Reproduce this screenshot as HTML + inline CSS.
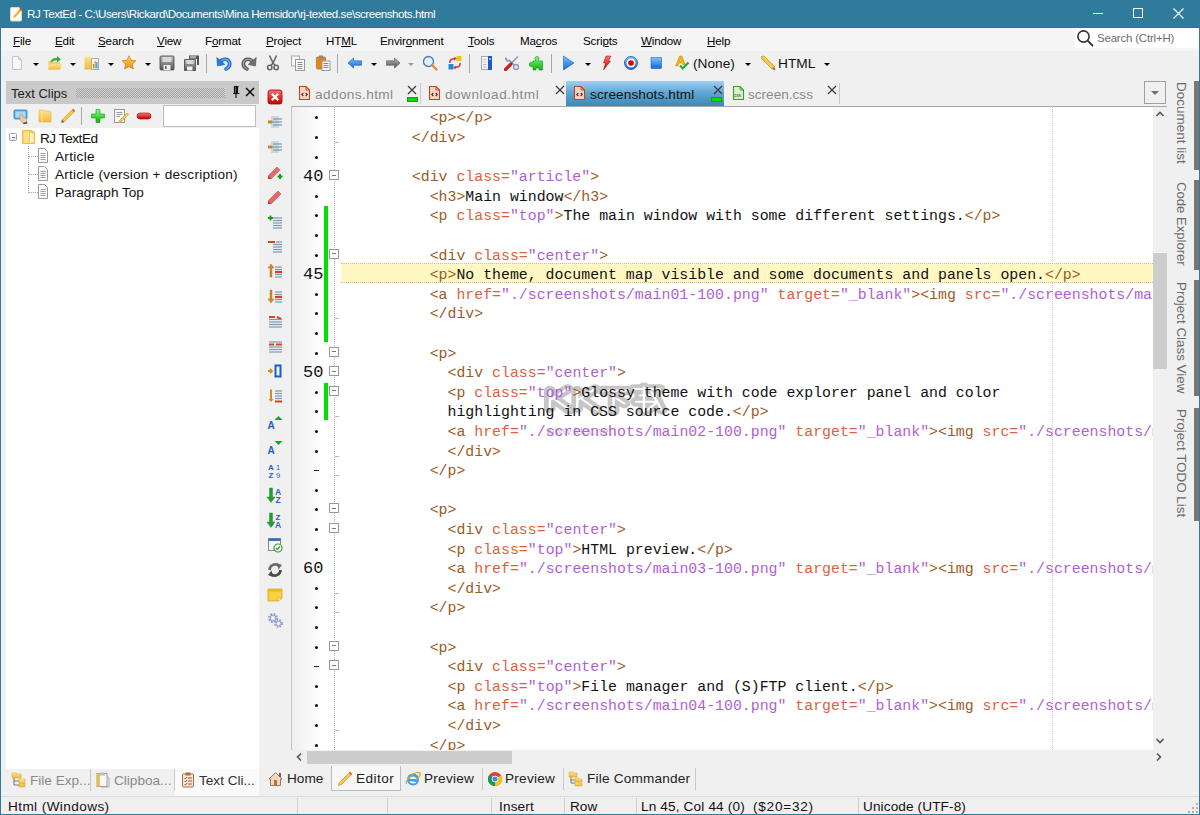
<!DOCTYPE html><html><head><meta charset="utf-8"><style>
*{box-sizing:border-box;margin:0;padding:0}
html,body{width:1200px;height:815px;overflow:hidden;background:#f0f0f0;font-family:"Liberation Sans",sans-serif;color:#000}
.abs{position:absolute}
.t{position:absolute;white-space:pre;line-height:1}
.code{position:absolute;left:0;white-space:pre;font-family:"Liberation Mono",monospace;font-size:14.86px;line-height:19.6px;height:19.6px}
.tg{color:#9c5a1f}.at{color:#e0603e}.vl{color:#b060d4}.tx{color:#111}
</style></head><body>

<svg width="0" height="0" style="position:absolute"><defs>
<linearGradient id="gFolder" x1="0" y1="0" x2="0" y2="1"><stop offset="0" stop-color="#ffe48a"/><stop offset="1" stop-color="#f2b93a"/></linearGradient>
<linearGradient id="gStar" x1="0" y1="0" x2="0" y2="1"><stop offset="0" stop-color="#ffd75a"/><stop offset="1" stop-color="#f08a10"/></linearGradient>
<linearGradient id="gBlue" x1="0" y1="0" x2="0" y2="1"><stop offset="0" stop-color="#7cc4ff"/><stop offset="1" stop-color="#1266d8"/></linearGradient>
<linearGradient id="gGrey" x1="0" y1="0" x2="0" y2="1"><stop offset="0" stop-color="#b8b8b8"/><stop offset="1" stop-color="#555"/></linearGradient>
<linearGradient id="gRed" x1="0" y1="0" x2="0" y2="1"><stop offset="0" stop-color="#ff7070"/><stop offset="1" stop-color="#c00000"/></linearGradient>
<linearGradient id="gGreen" x1="0" y1="0" x2="0" y2="1"><stop offset="0" stop-color="#80ff80"/><stop offset="1" stop-color="#10b010"/></linearGradient>
</defs></svg>
<div class="abs" style="left:0;top:0;width:1200px;height:28px;background:#2e7b9b"></div>
<div class="abs" style="left:0;top:27px;width:1200px;height:1px;background:#28769a"></div>
<svg class="abs" style="left:9px;top:6px" width="14" height="16" viewBox="0 0 14 16">
<path d="M1.5 2.5 Q1.5 1.5 2.5 1.5 H10 L12.5 4 V14 Q12.5 15 11.5 15 H2.5 Q1.5 15 1.5 14 Z" fill="#fdfdf5" stroke="#d8d8c8"/>
<path d="M4 12 L5 9.5 L11 3 L12.5 4.5 L6.5 11 Z" fill="#f0b030"/><circle cx="12" cy="3.3" r="1.3" fill="#e04020"/></svg>
<div class="t" style="left:27px;top:8px;font-size:11.6px;color:#fff;letter-spacing:-0.45px">RJ TextEd - C:\Users\Rickard\Documents\Mina Hemsidor\rj-texted.se\screenshots.html</div>
<div class="abs" style="left:1093px;top:13px;width:10px;height:1px;background:#fff"></div>
<div class="abs" style="left:1133px;top:8px;width:10px;height:10px;border:1px solid #fff"></div>
<svg class="abs" style="left:1173px;top:8px" width="11" height="11" viewBox="0 0 11 11"><path d="M0.5 0.5 L10.5 10.5 M10.5 0.5 L0.5 10.5" stroke="#fff" stroke-width="1.1"/></svg>
<div class="abs" style="left:0;top:27px;width:1px;height:788px;background:#2e7b9b"></div>
<div class="abs" style="left:1199px;top:27px;width:1px;height:788px;background:#2e7b9b"></div>
<div class="abs" style="left:0;top:814px;width:1200px;height:1px;background:#2e7b9b"></div>
<div class="abs" style="left:1px;top:28px;width:1198px;height:23px;background:#f5f5f5"></div>
<div class="t" style="left:13px;top:35px;font-size:11.6px;color:#000;letter-spacing:-0.15px"><u>F</u>ile</div>
<div class="t" style="left:55px;top:35px;font-size:11.6px;color:#000;letter-spacing:-0.15px"><u>E</u>dit</div>
<div class="t" style="left:98px;top:35px;font-size:11.6px;color:#000;letter-spacing:-0.15px"><u>S</u>earch</div>
<div class="t" style="left:157px;top:35px;font-size:11.6px;color:#000;letter-spacing:-0.15px"><u>V</u>iew</div>
<div class="t" style="left:205px;top:35px;font-size:11.6px;color:#000;letter-spacing:-0.15px">F<u>o</u>rmat</div>
<div class="t" style="left:266px;top:35px;font-size:11.6px;color:#000;letter-spacing:-0.15px"><u>P</u>roject</div>
<div class="t" style="left:326px;top:35px;font-size:11.6px;color:#000;letter-spacing:-0.15px">HT<u>M</u>L</div>
<div class="t" style="left:380px;top:35px;font-size:11.6px;color:#000;letter-spacing:-0.15px">Envir<u>o</u>nment</div>
<div class="t" style="left:468px;top:35px;font-size:11.6px;color:#000;letter-spacing:-0.15px"><u>T</u>ools</div>
<div class="t" style="left:520px;top:35px;font-size:11.6px;color:#000;letter-spacing:-0.15px">Ma<u>c</u>ros</div>
<div class="t" style="left:583px;top:35px;font-size:11.6px;color:#000;letter-spacing:-0.15px">Scri<u>p</u>ts</div>
<div class="t" style="left:641px;top:35px;font-size:11.6px;color:#000;letter-spacing:-0.15px"><u>W</u>indow</div>
<div class="t" style="left:707px;top:35px;font-size:11.6px;color:#000;letter-spacing:-0.15px"><u>H</u>elp</div>
<div class="abs" style="left:1075px;top:28px;width:124px;height:20px;background:#fff"></div>
<svg class="abs" style="left:1076px;top:29px" width="19" height="19" viewBox="0 0 19 19"><circle cx="7.5" cy="7.5" r="5.6" fill="none" stroke="#333" stroke-width="1.6"/><path d="M11.6 11.6 L17 17" stroke="#333" stroke-width="1.8"/></svg>
<div class="t" style="left:1097px;top:33px;font-size:11.5px;color:#6d6d6d;letter-spacing:-0.2px">Search (Ctrl+H)</div>
<div class="abs" style="left:1px;top:51px;width:1198px;height:29px;background:#f0f0f0"></div>
<svg class="abs" style="left:9px;top:55px" width="16" height="16" viewBox="0 0 16 16"><path d="M3.5 1.5 H9.5 L12.5 4.5 V14.5 H3.5 Z" fill="#f6f6f6" stroke="#c4c4c4"/><path d="M9.5 1.5 V4.5 H12.5" fill="#e0e0e0" stroke="#c4c4c4"/></svg>
<svg class="abs" style="left:47px;top:55px" width="16" height="16" viewBox="0 0 16 16"><path d="M1.5 6 H6 L7 7 H13 V14.5 H1.5 Z" fill="#f6cf6a"/><path d="M1 14.5 L3 9 H15 L13 14.5 Z" fill="url(#gFolder)"/><path d="M3.5 8 Q4 2.5 10 3 L10 1 L14 4.2 L10 7.5 L10 5.3 Q6 5 3.5 8 Z" fill="#2fae3a"/></svg>
<svg class="abs" style="left:84px;top:55px" width="16" height="16" viewBox="0 0 16 16"><path d="M0.5 1.5 H6 L7 3 H11 V14.5 H0.5 Z" fill="url(#gFolder)"/><rect x="7.5" y="3.5" width="7" height="11" fill="#fafafa" stroke="#aaa"/><rect x="9" y="9" width="1.3" height="4.5" fill="#5b5"/><rect x="10.6" y="6" width="1.3" height="7.5" fill="#f84"/><rect x="12.2" y="7" width="1.3" height="6.5" fill="#29d"/></svg>
<svg class="abs" style="left:121px;top:55px" width="16" height="16" viewBox="0 0 16 16"><path d="M8 0.8 L10.1 5.3 L15 5.8 L11.3 9.1 L12.4 14 L8 11.5 L3.6 14 L4.7 9.1 L1 5.8 L5.9 5.3 Z" fill="url(#gStar)" stroke="#d07a10" stroke-width="0.7"/></svg>
<svg class="abs" style="left:159px;top:55px" width="16" height="16" viewBox="0 0 16 16"><path d="M1 2 Q1 1 2 1 H14 Q15 1 15 2 V14 Q15 15 14 15 H2 Q1 15 1 14 Z" fill="url(#gGrey)" stroke="#444" stroke-width="0.8"/><rect x="3.5" y="2" width="9" height="5" fill="#d8d8d8"/><rect x="4.5" y="10" width="7" height="5" fill="#eee"/><rect x="6" y="11" width="1.5" height="3" fill="#555"/></svg>
<svg class="abs" style="left:184px;top:55px" width="16" height="16" viewBox="0 0 16 16"><path d="M5 0.5 H15 V10 H13 V4 H5 Z" fill="#555"/><rect x="6" y="1" width="6" height="2.5" fill="#aaa"/><path d="M0.5 4.5 H11.5 V15.5 H0.5 Z" fill="url(#gGrey)" stroke="#444" stroke-width="0.8"/><rect x="2.5" y="5" width="7" height="4" fill="#d8d8d8"/><rect x="3" y="11.5" width="5.5" height="4" fill="#eee"/></svg>
<svg class="abs" style="left:216px;top:55px" width="16" height="16" viewBox="0 0 16 16"><path d="M10 14 Q14.5 11.5 13.5 7.5 Q12 3.5 7.5 4.5 Q5.5 5 4.5 6.5" stroke="#1a5cc0" stroke-width="3.6" fill="none" stroke-linecap="round"/><path d="M10 14 Q14.5 11.5 13.5 7.5 Q12 3.5 7.5 4.5 Q5.5 5 4.5 6.5" stroke="#5aaaf8" stroke-width="1.8" fill="none" stroke-linecap="round"/><path d="M0.8 2.5 L1.5 11 L9 9.5 Z" fill="#2a78e0" stroke="#1a5cc0" stroke-width="0.6" stroke-linejoin="round"/></svg>
<svg class="abs" style="left:241px;top:55px" width="16" height="16" viewBox="0 0 16 16"><path d="M6 14 Q1.5 11.5 2.5 7.5 Q4 3.5 8.5 4.5 Q10.5 5 11.5 6.5" stroke="#505050" stroke-width="3.6" fill="none" stroke-linecap="round"/><path d="M6 14 Q1.5 11.5 2.5 7.5 Q4 3.5 8.5 4.5 Q10.5 5 11.5 6.5" stroke="#9a9a9a" stroke-width="1.6" fill="none" stroke-linecap="round"/><path d="M15.2 2.5 L14.5 11 L7 9.5 Z" fill="#707070" stroke="#505050" stroke-width="0.6" stroke-linejoin="round"/></svg>
<svg class="abs" style="left:265px;top:55px" width="16" height="16" viewBox="0 0 16 16"><path d="M4.5 0.5 L8 8 M11.5 0.5 L8 8" stroke="#666" stroke-width="1.6"/><path d="M8 8 L5.5 11 M8 8 L10.5 11" stroke="#666" stroke-width="1.4"/><circle cx="4.8" cy="12.5" r="2.2" fill="none" stroke="#666" stroke-width="1.5"/><circle cx="11.2" cy="12.5" r="2.2" fill="none" stroke="#666" stroke-width="1.5"/></svg>
<svg class="abs" style="left:290px;top:55px" width="16" height="16" viewBox="0 0 16 16"><rect x="1.5" y="1" width="8" height="10" fill="#f6f6f6" stroke="#aaa"/><rect x="5.5" y="4.5" width="9" height="11" fill="#fafafa" stroke="#999"/><path d="M7.5 7.5 H12.5 M7.5 9.5 H12.5 M7.5 11.5 H12.5 M7.5 13.5 H12" stroke="#888"/></svg>
<svg class="abs" style="left:315px;top:55px" width="16" height="16" viewBox="0 0 16 16"><rect x="1.5" y="2" width="9" height="12" rx="1" fill="#e0861a" stroke="#a85a08" stroke-width="0.6"/><rect x="4" y="0.5" width="4" height="3" fill="#888"/><rect x="7" y="6" width="8" height="9.5" fill="#fafafa" stroke="#999"/><path d="M8.5 8.5 H13.5 M8.5 10.5 H13.5 M8.5 12.5 H13.5" stroke="#888"/></svg>
<svg class="abs" style="left:347px;top:55px" width="16" height="16" viewBox="0 0 16 16"><path d="M1 8 L6.5 3 V5.8 H14.5 V10.2 H6.5 V13 Z" fill="url(#gBlue)" stroke="#1a5cc0" stroke-width="0.6"/></svg>
<svg class="abs" style="left:385px;top:55px" width="16" height="16" viewBox="0 0 16 16"><path d="M15 8 L9.5 3 V5.8 H1.5 V10.2 H9.5 V13 Z" fill="url(#gGrey)" stroke="#555" stroke-width="0.6"/></svg>
<svg class="abs" style="left:422px;top:55px" width="16" height="16" viewBox="0 0 16 16"><circle cx="6.5" cy="6.5" r="5" fill="#dff0ff" stroke="#4a7ab0" stroke-width="1.3"/><path d="M10 10 L14.5 14.5" stroke="#e08a30" stroke-width="2.3" stroke-linecap="round"/></svg>
<svg class="abs" style="left:447px;top:55px" width="16" height="16" viewBox="0 0 16 16"><rect x="9.5" y="1" width="5" height="5" fill="#f8c400"/><rect x="1.5" y="9" width="5" height="5.5" fill="#1e90d0"/><path d="M2 8 Q2 3 7.5 3 L7 1.5 L10 3.5 L7 5.5 L7.2 4.5 Q3.5 4.5 3.5 8 Z" fill="#e03030"/><path d="M14 8 Q14 13 8.5 13 L9 14.5 L6 12.5 L9 10.5 L8.8 11.5 Q12.5 11.5 12.5 8 Z" fill="#e03030"/></svg>
<svg class="abs" style="left:479px;top:55px" width="16" height="16" viewBox="0 0 16 16"><rect x="2.5" y="1.5" width="10" height="13" fill="#f4f4f4" stroke="#a8a8a8"/><rect x="9" y="1" width="4" height="14" fill="#1a5cc8"/><rect x="10.5" y="3" width="1" height="2" fill="#fff"/><path d="M4 4.5 H7.5 M4 7 H7.5 M4 9.5 H7.5 M4 12 H7.5" stroke="#b8b8b8" stroke-width="0.8"/></svg>
<svg class="abs" style="left:504px;top:55px" width="16" height="16" viewBox="0 0 16 16"><path d="M14 1.5 L6.5 9" stroke="#8a96c0" stroke-width="1.6"/><circle cx="12" cy="12" r="2.4" fill="none" stroke="#8a96c0" stroke-width="1.5"/><path d="M9.8 9.8 L5 5" stroke="#8a96c0" stroke-width="1.6"/><path d="M2 2.5 A2.5 2.5 0 0 0 5.5 5.5" stroke="#8a96c0" stroke-width="1.8" fill="none"/><path d="M1.5 14.5 L7 9" stroke="#c81e1e" stroke-width="3.2" stroke-linecap="round"/></svg>
<svg class="abs" style="left:529px;top:55px" width="16" height="16" viewBox="0 0 16 16"><path d="M4 6 H6.5 V4.8 A2 2 0 1 1 9.5 4.8 V6 H13.5 V15 H10 V13 H7 V15 H4 V11 A2.2 2.2 0 1 1 4 8 Z" fill="url(#gGreen)" stroke="#109010" stroke-width="0.6"/></svg>
<svg class="abs" style="left:561px;top:55px" width="16" height="16" viewBox="0 0 16 16"><path d="M2.5 1 L13 8 L2.5 15 Z" fill="url(#gBlue)" stroke="#1a5cc0" stroke-width="0.6"/></svg>
<svg class="abs" style="left:599px;top:55px" width="16" height="16" viewBox="0 0 16 16"><path d="M7 1 H12 L9.5 6 H11.5 L4.5 15 L6.5 8 H4.5 Z" fill="url(#gRed)" stroke="#a01010" stroke-width="0.5"/></svg>
<svg class="abs" style="left:623px;top:55px" width="16" height="16" viewBox="0 0 16 16"><circle cx="8" cy="8" r="6.5" fill="url(#gBlue)" stroke="#1a50b0" stroke-width="0.8"/><circle cx="8" cy="8" r="4.5" fill="#e8f4ff"/><circle cx="8" cy="8" r="2.8" fill="#e00000"/></svg>
<svg class="abs" style="left:648px;top:55px" width="16" height="16" viewBox="0 0 16 16"><rect x="3" y="2.5" width="10.5" height="11" fill="url(#gBlue)" stroke="#1a50b0" stroke-width="0.5"/></svg>
<svg class="abs" style="left:674px;top:55px" width="16" height="16" viewBox="0 0 16 16"><path d="M1.5 11 L5.5 1 H8 L11.5 10 H9 L8.2 8 H5 L4.2 11 Z M5.6 6 H7.6 L6.6 3 Z" fill="#f2b30a" stroke="#c08000" stroke-width="0.4"/><path d="M6 10.5 L8.8 13.5 L14.5 7.5" stroke="#28a838" stroke-width="2.2" fill="none"/></svg>
<svg class="abs" style="left:760px;top:55px" width="16" height="16" viewBox="0 0 16 16"><path d="M1.5 1.5 L4 1 L14.5 11.5 L12 14 L1.5 3.5 Z" fill="#f5c84a" stroke="#c89020" stroke-width="0.7"/><path d="M12 14 L14.5 11.5 L15.5 15.5 Z" fill="#a07060"/></svg>
<div class="abs" style="left:33px;top:63px;width:0;height:0;border-left:3px solid transparent;border-right:3px solid transparent;border-top:3px solid #000"></div>
<div class="abs" style="left:70px;top:63px;width:0;height:0;border-left:3px solid transparent;border-right:3px solid transparent;border-top:3px solid #000"></div>
<div class="abs" style="left:108px;top:63px;width:0;height:0;border-left:3px solid transparent;border-right:3px solid transparent;border-top:3px solid #000"></div>
<div class="abs" style="left:145px;top:63px;width:0;height:0;border-left:3px solid transparent;border-right:3px solid transparent;border-top:3px solid #000"></div>
<div class="abs" style="left:371px;top:63px;width:0;height:0;border-left:3px solid transparent;border-right:3px solid transparent;border-top:3px solid #000"></div>
<div class="abs" style="left:585px;top:63px;width:0;height:0;border-left:3px solid transparent;border-right:3px solid transparent;border-top:3px solid #000"></div>
<div class="abs" style="left:745px;top:63px;width:0;height:0;border-left:3px solid transparent;border-right:3px solid transparent;border-top:3px solid #000"></div>
<div class="abs" style="left:824px;top:63px;width:0;height:0;border-left:3px solid transparent;border-right:3px solid transparent;border-top:3px solid #000"></div>
<div class="abs" style="left:408px;top:63px;width:0;height:0;border-left:3px solid transparent;border-right:3px solid transparent;border-top:3px solid #9a9a9a"></div>
<div class="abs" style="left:206px;top:54px;width:1px;height:19px;background:#a8a8a8"></div>
<div class="abs" style="left:337px;top:54px;width:1px;height:19px;background:#a8a8a8"></div>
<div class="abs" style="left:469px;top:54px;width:1px;height:19px;background:#a8a8a8"></div>
<div class="abs" style="left:551px;top:54px;width:1px;height:19px;background:#a8a8a8"></div>
<div class="t" style="left:693px;top:57px;font-size:13.7px;color:#111">(None)</div>
<div class="t" style="left:778px;top:57px;font-size:13.7px;color:#111">HTML</div>
<div class="abs" style="left:6px;top:81px;width:253px;height:23px;background:#c9c9c9"></div>
<div class="abs" style="left:76px;top:88px;width:149px;height:10px;background-image:repeating-conic-gradient(#a6a6a6 0 25%, #cfcfcf 0 50%);background-size:2px 2px"></div>
<div class="t" style="left:11px;top:87px;font-size:13px;color:#1e1e1e">Text Clips</div>
<svg class="abs" style="left:231px;top:85px" width="10" height="14" viewBox="0 0 10 14"><path d="M3 1.5 H7.5 M3.5 1.5 V8 M6.5 1.5 V8 M2 8.5 H8.5 M5 8.5 V13" stroke="#111" stroke-width="1.2" fill="none"/><rect x="4.5" y="2" width="1.5" height="6" fill="#111"/></svg>
<svg class="abs" style="left:245px;top:87px" width="10" height="10" viewBox="0 0 10 10"><path d="M1 1 L9 9 M9 1 L1 9" stroke="#111" stroke-width="1.6"/></svg>
<div class="abs" style="left:163px;top:105px;width:93px;height:22px;background:#fff;border:1px solid #bdbdbd"></div>
<div class="abs" style="left:6px;top:128px;width:253px;height:641px;background:#fff"></div>
<svg class="abs" style="left:13px;top:108px" width="16" height="16" viewBox="0 0 16 16"><rect x="1" y="2" width="13" height="9" rx="1" fill="#5ab0f0" stroke="#2a80c8" stroke-width="0.8"/><rect x="2.5" y="3.5" width="10" height="6" fill="#a8dcff"/><path d="M7 6 L9 6 L10 9 L13 10 L14 14 L10 15 L7 12 Z" fill="#f2c8a0" stroke="#b08060" stroke-width="0.5"/><path d="M10 15 L14 14 L14.5 15.5 L10.5 16 Z" fill="#333"/></svg>
<svg class="abs" style="left:38px;top:108px" width="16" height="16" viewBox="0 0 16 16"><path d="M1 2 H5 L6 3 H11 Q13 3 13 5 V14 H1 Z" fill="url(#gFolder)" stroke="#e0a830" stroke-width="0.5"/><path d="M4 3 V14" stroke="#fff0b0" stroke-width="0.7"/></svg>
<svg class="abs" style="left:60px;top:108px" width="16" height="16" viewBox="0 0 16 16"><path d="M14 1.5 L15 3 L4 14 L1.5 14.5 L2 12 L13 1 Z" fill="#f5c84a" stroke="#c89020" stroke-width="0.6"/><path d="M13 1 L15 3 L14 4 L12 2 Z" fill="#e05030"/><path d="M2 12 L4 14 L1.5 14.5 Z" fill="#604030"/></svg>
<svg class="abs" style="left:90px;top:108px" width="16" height="16" viewBox="0 0 16 16"><path d="M6 1.5 H10 V6 H14.5 V10 H10 V14.5 H6 V10 H1.5 V6 H6 Z" fill="url(#gGreen)" stroke="#10a010" stroke-width="0.6"/></svg>
<svg class="abs" style="left:113px;top:108px" width="16" height="16" viewBox="0 0 16 16"><rect x="1.5" y="1.5" width="10" height="13" fill="#f8f8f8" stroke="#999"/><path d="M3.5 4.5 H9.5 M3.5 6.5 H9.5 M3.5 8.5 H7" stroke="#999"/><path d="M14 5 L15.5 6.5 L8 14 L6 14.5 L6.5 12.5 Z" fill="#f5c84a" stroke="#c89020" stroke-width="0.5"/></svg>
<svg class="abs" style="left:136px;top:108px" width="16" height="16" viewBox="0 0 16 16"><rect x="1" y="5" width="14" height="6" rx="3" fill="url(#gRed)" stroke="#a00000" stroke-width="0.6"/></svg>
<div class="abs" style="left:81px;top:107px;width:1px;height:18px;background:#a8a8a8"></div>
<div class="abs" style="left:9px;top:133px;width:8px;height:8px;border:1px solid #a0a0a0;border-radius:1.5px;background:linear-gradient(#fff,#e6e6e6)"><div class="abs" style="left:1.5px;top:2.5px;width:3px;height:1px;background:#5a6ab8"></div></div>
<svg class="abs" style="left:22px;top:130px" width="13" height="14" viewBox="0 0 13 14"><path d="M0.5 0.5 H9.5 L12.5 2.5 V13.5 H0.5 Z" fill="#f5c842" stroke="#e8b830" stroke-width="0.8"/><path d="M1.5 1.5 H7 V13 H1.5 Z" fill="#fde08a"/><path d="M7.5 2 L12 3.5 V12.5 L7.5 13.5 Z" fill="#fff2c0" stroke="#f0c040" stroke-width="0.6"/></svg>
<div class="t" style="left:40px;top:132px;font-size:13.6px;color:#111;letter-spacing:-0.45px">RJ TextEd</div>
<div class="abs" style="left:28px;top:146px;width:0;height:47px;border-left:1px dotted #a0a0a0"></div>
<div class="abs" style="left:29px;top:156px;width:9px;height:0;border-top:1px dotted #a0a0a0"></div>
<svg class="abs" style="left:36px;top:148px" width="16" height="16" viewBox="0 0 16 16"><path d="M2.5 0.5 H8.5 L11.5 3.5 V14.5 H2.5 Z" fill="#fafafa" stroke="#9a9a9a"/><path d="M4.5 5.5 H9.5 M4.5 7.5 H9.5 M4.5 9.5 H9.5 M4.5 11.5 H9.5" stroke="#a0a0a0"/></svg>
<div class="t" style="left:55px;top:150px;font-size:13.6px;color:#111;letter-spacing:0.3px">Article</div>
<div class="abs" style="left:29px;top:174px;width:9px;height:0;border-top:1px dotted #a0a0a0"></div>
<svg class="abs" style="left:36px;top:166px" width="16" height="16" viewBox="0 0 16 16"><path d="M2.5 0.5 H8.5 L11.5 3.5 V14.5 H2.5 Z" fill="#fafafa" stroke="#9a9a9a"/><path d="M4.5 5.5 H9.5 M4.5 7.5 H9.5 M4.5 9.5 H9.5 M4.5 11.5 H9.5" stroke="#a0a0a0"/></svg>
<div class="t" style="left:55px;top:168px;font-size:13.6px;color:#111;letter-spacing:0.23px">Article (version + description)</div>
<div class="abs" style="left:29px;top:192px;width:9px;height:0;border-top:1px dotted #a0a0a0"></div>
<svg class="abs" style="left:36px;top:184px" width="16" height="16" viewBox="0 0 16 16"><path d="M2.5 0.5 H8.5 L11.5 3.5 V14.5 H2.5 Z" fill="#fafafa" stroke="#9a9a9a"/><path d="M4.5 5.5 H9.5 M4.5 7.5 H9.5 M4.5 9.5 H9.5 M4.5 11.5 H9.5" stroke="#a0a0a0"/></svg>
<div class="t" style="left:55px;top:186px;font-size:13.6px;color:#111">Paragraph Top</div>
<svg class="abs" style="left:267px;top:89px" width="16" height="16" viewBox="0 0 16 16"><rect x="1" y="1" width="14" height="14" rx="2.5" fill="url(#gRed)" stroke="#a00000" stroke-width="0.8"/><path d="M4.8 4.8 L11.2 11.2 M11.2 4.8 L4.8 11.2" stroke="#fff" stroke-width="2.2"/></svg>
<svg class="abs" style="left:267px;top:114px" width="16" height="16" viewBox="0 0 16 16"><rect x="4" y="2" width="8" height="12" fill="#c8d8e4"/><path d="M6 5 H15" stroke="#7a9ab4" stroke-width="1.2"/><path d="M6 8 H15" stroke="#7a9ab4" stroke-width="1.2"/><path d="M6 11 H15" stroke="#7a9ab4" stroke-width="1.2"/><path d="M1 6.5 H4.5 L6.5 8 L4.5 9.5 H1 Z" fill="#c88a20"/></svg>
<svg class="abs" style="left:267px;top:139px" width="16" height="16" viewBox="0 0 16 16"><rect x="4" y="2" width="8" height="12" fill="#c8d8e4"/><path d="M6 5 H15" stroke="#7a9ab4" stroke-width="1.2"/><path d="M6 8 H15" stroke="#7a9ab4" stroke-width="1.2"/><path d="M6 11 H15" stroke="#7a9ab4" stroke-width="1.2"/><path d="M1 6.5 H4.5 L6.5 8 L4.5 9.5 H1 Z" fill="#c88a20"/></svg>
<svg class="abs" style="left:267px;top:164px" width="16" height="16" viewBox="0 0 16 16"><path d="M1 12 L10 3 L13 6 L4 15 Z" fill="#e86868" stroke="#c04040" stroke-width="0.5"/><path d="M1 12 L4 15 L1 15 Z" fill="#b03030"/><path d="M10.5 12.5 H15.5 M13 10 V15" stroke="#10a010" stroke-width="2"/></svg>
<svg class="abs" style="left:267px;top:189px" width="16" height="16" viewBox="0 0 16 16"><path d="M1 12 L11 2 L14 5 L4 15 Z" fill="#e86868" stroke="#c04040" stroke-width="0.5"/><path d="M1 12 L4 15 L1 15 Z" fill="#b03030"/></svg>
<svg class="abs" style="left:267px;top:214px" width="16" height="16" viewBox="0 0 16 16"><path d="M6 4 H15" stroke="#7a9ab4" stroke-width="1.2"/><path d="M6 6.5 H15" stroke="#7a9ab4" stroke-width="1.2"/><path d="M6 9 H15" stroke="#7a9ab4" stroke-width="1.2"/><path d="M6 11.5 H15" stroke="#7a9ab4" stroke-width="1.2"/><path d="M6 14 H15" stroke="#7a9ab4" stroke-width="1.2"/><path d="M1 4 H6 M3.5 1.5 V6.5" stroke="#10a010" stroke-width="1.8"/></svg>
<svg class="abs" style="left:267px;top:238px" width="16" height="16" viewBox="0 0 16 16"><path d="M6 6.5 H15" stroke="#7a9ab4" stroke-width="1.2"/><path d="M6 9 H15" stroke="#7a9ab4" stroke-width="1.2"/><path d="M6 11.5 H15" stroke="#7a9ab4" stroke-width="1.2"/><path d="M6 14 H15" stroke="#7a9ab4" stroke-width="1.2"/><path d="M1 4 H8" stroke="#e04020" stroke-width="2"/><path d="M9 4 H15" stroke="#7a9ab4" stroke-width="1.2"/></svg>
<svg class="abs" style="left:267px;top:263px" width="16" height="16" viewBox="0 0 16 16"><path d="M8 4 H15" stroke="#7a9ab4" stroke-width="1.2"/><path d="M8 6.5 H15" stroke="#7a9ab4" stroke-width="1.2"/><path d="M8 11.5 H15" stroke="#7a9ab4" stroke-width="1.2"/><path d="M8 14 H15" stroke="#7a9ab4" stroke-width="1.2"/><path d="M8 9 H15" stroke="#e04020" stroke-width="2.2"/><path d="M4 1 L7 5 H5 V14 H3 V5 H1 Z" fill="#d88a20" stroke="#a06010" stroke-width="0.4"/></svg>
<svg class="abs" style="left:267px;top:288px" width="16" height="16" viewBox="0 0 16 16"><path d="M8 4 H15" stroke="#7a9ab4" stroke-width="1.2"/><path d="M8 6.5 H15" stroke="#7a9ab4" stroke-width="1.2"/><path d="M8 11.5 H15" stroke="#7a9ab4" stroke-width="1.2"/><path d="M8 14 H15" stroke="#7a9ab4" stroke-width="1.2"/><path d="M8 9 H15" stroke="#e04020" stroke-width="2.2"/><path d="M4 15 L7 11 H5 V2 H3 V11 H1 Z" fill="#d88a20" stroke="#a06010" stroke-width="0.4"/></svg>
<svg class="abs" style="left:267px;top:313px" width="16" height="16" viewBox="0 0 16 16"><path d="M2 9 H15" stroke="#7a9ab4" stroke-width="1.2"/><path d="M2 11.5 H15" stroke="#7a9ab4" stroke-width="1.2"/><path d="M2 14 H15" stroke="#7a9ab4" stroke-width="1.2"/><path d="M2 4 H8 M10 4 L14 6" stroke="#e04020" stroke-width="2"/><path d="M2 6.5 H15" stroke="#7a9ab4" stroke-width="1.2"/></svg>
<svg class="abs" style="left:267px;top:338px" width="16" height="16" viewBox="0 0 16 16"><path d="M2 4 H15" stroke="#7a9ab4" stroke-width="1.2"/><path d="M2 9 H15" stroke="#7a9ab4" stroke-width="1.2"/><path d="M2 11.5 H15" stroke="#7a9ab4" stroke-width="1.2"/><path d="M2 14 H15" stroke="#7a9ab4" stroke-width="1.2"/><path d="M2 6.5 H7 M9 6.5 H15" stroke="#e04020" stroke-width="2"/></svg>
<svg class="abs" style="left:267px;top:363px" width="16" height="16" viewBox="0 0 16 16"><path d="M1 8 H4 M3 6 L5 8 L3 10" stroke="#d88a20" stroke-width="1.8" fill="none"/><rect x="8.5" y="2.5" width="5" height="11" fill="none" stroke="#1a5cc8" stroke-width="2"/></svg>
<svg class="abs" style="left:267px;top:388px" width="16" height="16" viewBox="0 0 16 16"><path d="M8 3 H15" stroke="#7a9ab4" stroke-width="1.2"/><path d="M8 5.5 H15" stroke="#7a9ab4" stroke-width="1.2"/><path d="M8 8 H15" stroke="#7a9ab4" stroke-width="1.2"/><path d="M8 10.5 H15" stroke="#7a9ab4" stroke-width="1.2"/><path d="M8 13.5 H15" stroke="#e04020" stroke-width="2"/><path d="M4 14 L6.5 11 H5 V1.5 H3 V11 H1.5 Z" fill="#d88a20"/></svg>
<svg class="abs" style="left:267px;top:413px" width="16" height="16" viewBox="0 0 16 16"><text x="0.5" y="15.5" font-family="Liberation Sans" font-weight="bold" font-size="10" fill="#2a5cc8">A</text><path d="M7.5 7 L11.5 3 L15.5 7 Z" fill="#20a030"/></svg>
<svg class="abs" style="left:267px;top:438px" width="16" height="16" viewBox="0 0 16 16"><text x="0.5" y="15.5" font-family="Liberation Sans" font-weight="bold" font-size="10" fill="#2a5cc8">A</text><path d="M7.5 3 L11.5 7 L15.5 3 Z" fill="#20a030"/></svg>
<svg class="abs" style="left:267px;top:462px" width="16" height="16" viewBox="0 0 16 16"><text x="1" y="8" font-family="Liberation Sans" font-weight="bold" font-size="8" fill="#2a5cc8">A</text><text x="9" y="7.5" font-family="Liberation Sans" font-size="7.5" fill="#2a5cc8">1</text><text x="1.5" y="15.5" font-family="Liberation Sans" font-weight="bold" font-size="8" fill="#2a5cc8">Z</text><text x="9" y="15.5" font-family="Liberation Sans" font-size="7.5" fill="#2a5cc8">9</text></svg>
<svg class="abs" style="left:267px;top:487px" width="16" height="16" viewBox="0 0 16 16"><path d="M2.5 1 H5.5 V10 H8 L4 15.5 L0 10 H2.5 Z" fill="#20a030" stroke="#108020" stroke-width="0.4"/><text x="8" y="7.5" font-family="Liberation Sans" font-weight="bold" font-size="8.5" fill="#2a5cc8">A</text><text x="8.5" y="15.5" font-family="Liberation Sans" font-weight="bold" font-size="8.5" fill="#2a5cc8">Z</text></svg>
<svg class="abs" style="left:267px;top:512px" width="16" height="16" viewBox="0 0 16 16"><path d="M2.5 1 H5.5 V10 H8 L4 15.5 L0 10 H2.5 Z" fill="#20a030" stroke="#108020" stroke-width="0.4"/><text x="8.5" y="7.5" font-family="Liberation Sans" font-weight="bold" font-size="8" fill="#2a5cc8">Z</text><text x="8" y="15.5" font-family="Liberation Sans" font-weight="bold" font-size="8.5" fill="#2a5cc8">A</text></svg>
<svg class="abs" style="left:267px;top:537px" width="16" height="16" viewBox="0 0 16 16"><rect x="1.5" y="1.5" width="12" height="12" fill="#f4f4f4" stroke="#888"/><rect x="1.5" y="1.5" width="12" height="2.5" fill="#3a70c8"/><circle cx="11" cy="11" r="4" fill="#fff" stroke="#30a040" stroke-width="1.2"/><path d="M9 11 L10.5 12.5 L13 9.5" stroke="#30a040" stroke-width="1.3" fill="none"/></svg>
<svg class="abs" style="left:267px;top:562px" width="16" height="16" viewBox="0 0 16 16"><path d="M2.5 8 A5.5 5.5 0 0 1 12 4.2" stroke="#6a6a6a" stroke-width="2.6" fill="none"/><path d="M10 1 L15 3 L11.5 7.5 Z" fill="#6a6a6a"/><path d="M13.5 8 A5.5 5.5 0 0 1 4 11.8" stroke="#4a4a4a" stroke-width="2.6" fill="none"/><path d="M6 15 L1 13 L4.5 8.5 Z" fill="#4a4a4a"/></svg>
<svg class="abs" style="left:267px;top:587px" width="16" height="16" viewBox="0 0 16 16"><path d="M1 2 H15 V11 L11 14 H1 Z" fill="#f8d040" stroke="#d0a010" stroke-width="0.7"/><path d="M1 2 H15 V4.5 H1 Z" fill="#e8b820"/><path d="M15 11 L11 11 V14 Z" fill="#fff2b0" stroke="#d0a010" stroke-width="0.5"/></svg>
<svg class="abs" style="left:267px;top:612px" width="16" height="16" viewBox="0 0 16 16"><circle cx="6" cy="6" r="4.2" fill="none" stroke="#8a9ad0" stroke-width="1.6" stroke-dasharray="1.8 1.5"/><circle cx="6" cy="6" r="3" fill="#dde4f4" stroke="#8a9ad0" stroke-width="1"/><circle cx="6" cy="6" r="1.2" fill="#fff"/><circle cx="11.5" cy="11.5" r="3.6" fill="none" stroke="#8a9ad0" stroke-width="1.5" stroke-dasharray="1.6 1.3"/><circle cx="11.5" cy="11.5" r="2.5" fill="#dde4f4" stroke="#8a9ad0" stroke-width="0.9"/><circle cx="11.5" cy="11.5" r="1" fill="#fff"/></svg>
<div class="abs" style="left:566px;top:81px;width:158px;height:25px;background:linear-gradient(#9fd0f5 0%,#62a6d3 45%,#3f88b3 100%)"></div>
<div class="t" style="left:315px;top:88px;font-size:13.6px;color:#8a8a8a;letter-spacing:0.4px">addons.html</div>
<div class="t" style="left:445px;top:88px;font-size:13.6px;color:#8a8a8a;letter-spacing:0.5px">download.html</div>
<div class="t" style="left:590px;top:88px;font-size:13.6px;color:#111;letter-spacing:0.1px">screenshots.html</div>
<div class="t" style="left:748px;top:88px;font-size:13.6px;color:#8a8a8a">screen.css</div>
<svg class="abs" style="left:298px;top:85px" width="13" height="16" viewBox="0 0 13 16"><path d="M1.5 1.5 H8 L11.5 5 V14.5 H1.5 Z" fill="#ffd2c2" stroke="#b8461e" stroke-width="1.1"/><path d="M8 1.5 V5 H11.5" fill="none" stroke="#b8461e" stroke-width="0.9"/><path d="M5.3 8 L3.8 9.5 L5.3 11 M7.7 8 L9.2 9.5 L7.7 11" stroke="#333" stroke-width="1.1" fill="none"/></svg>
<svg class="abs" style="left:428px;top:85px" width="13" height="16" viewBox="0 0 13 16"><path d="M1.5 1.5 H8 L11.5 5 V14.5 H1.5 Z" fill="#ffd2c2" stroke="#b8461e" stroke-width="1.1"/><path d="M8 1.5 V5 H11.5" fill="none" stroke="#b8461e" stroke-width="0.9"/><path d="M5.3 8 L3.8 9.5 L5.3 11 M7.7 8 L9.2 9.5 L7.7 11" stroke="#333" stroke-width="1.1" fill="none"/></svg>
<svg class="abs" style="left:573px;top:85px" width="13" height="16" viewBox="0 0 13 16"><path d="M1.5 1.5 H8 L11.5 5 V14.5 H1.5 Z" fill="#ffd2c2" stroke="#b8461e" stroke-width="1.1"/><path d="M8 1.5 V5 H11.5" fill="none" stroke="#b8461e" stroke-width="0.9"/><path d="M5.3 8 L3.8 9.5 L5.3 11 M7.7 8 L9.2 9.5 L7.7 11" stroke="#333" stroke-width="1.1" fill="none"/></svg>
<svg class="abs" style="left:732px;top:85px" width="13" height="16" viewBox="0 0 13 16"><path d="M1.5 1.5 H8 L11.5 5 V14.5 H1.5 Z" fill="#d8f4c8" stroke="#3a9a2a" stroke-width="1.1"/><path d="M8 1.5 V5 H11.5" fill="none" stroke="#3a9a2a" stroke-width="0.9"/><text x="2.3" y="11.5" font-family="Liberation Sans" font-size="4.5" fill="#333">css</text></svg>
<svg class="abs" style="left:407px;top:85px" width="10" height="10" viewBox="0 0 10 10"><path d="M1 1 L9 9 M9 1 L1 9" stroke="#3a3a3a" stroke-width="1.2"/></svg>
<svg class="abs" style="left:555px;top:85px" width="10" height="10" viewBox="0 0 10 10"><path d="M1 1 L9 9 M9 1 L1 9" stroke="#3a3a3a" stroke-width="1.2"/></svg>
<svg class="abs" style="left:713px;top:85px" width="10" height="10" viewBox="0 0 10 10"><path d="M1 1 L9 9 M9 1 L1 9" stroke="#3a3a3a" stroke-width="1.2"/></svg>
<svg class="abs" style="left:827px;top:85px" width="10" height="10" viewBox="0 0 10 10"><path d="M1 1 L9 9 M9 1 L1 9" stroke="#3a3a3a" stroke-width="1.2"/></svg>
<div class="abs" style="left:407px;top:97px;width:11px;height:5px;background:#00e000;border:1px solid #1a9a1a"></div>
<div class="abs" style="left:711px;top:97px;width:11px;height:5px;background:#00e000;border:1px solid #1a9a1a"></div>
<div class="abs" style="left:420px;top:83px;width:1px;height:21px;background:#c8c8c8"></div>
<div class="abs" style="left:839px;top:83px;width:1px;height:21px;background:#c8c8c8"></div>
<div class="abs" style="left:1144px;top:81px;width:22px;height:23px;border:1px solid #a0a0a0"></div>
<div class="abs" style="left:1151px;top:91px;width:0;height:0;border-left:4px solid transparent;border-right:4px solid transparent;border-top:4px solid #707070"></div>
<div class="abs" style="left:291px;top:106px;width:876px;height:644px;background:#fff;border-top:1px solid #a8a8a8;border-left:1px solid #c4c4c4"></div>
<div class="abs" style="left:292px;top:107px;width:32px;height:643px;background:linear-gradient(90deg,#efefef,#ffffff)"></div>
<div class="abs" style="left:1052px;top:107px;width:0;height:643px;border-left:1px dotted #c8c8c8"></div>
<div class="abs" style="left:334px;top:107px;width:0;height:643px;border-left:1px dotted #b0b0b0"></div>
<div class="abs" style="left:341px;top:263.2px;width:812px;height:19.6px;background:#fff8c2;border-top:1px dotted #c8c090;border-bottom:1px dotted #c8c090"></div>
<svg class="abs" style="left:540px;top:378px" width="130" height="62" viewBox="0 0 130 62">
<g transform="translate(2,3) scale(0.98,0.8)" stroke="#c6c6c6" stroke-width="12" stroke-linejoin="round" stroke-linecap="round" fill="#c6c6c6">
<path d="M8 12 L8 34 M8 24 L26 10 M12 22 L28 36"/>
<path d="M36 12 L36 34 M36 24 L54 10 M40 22 L56 36"/>
<path d="M62 12 H86 M73 12 V38 M76 22 L84 28"/>
<path d="M94 10 H120 M100 18 H116 M96 26 H118 M104 8 V38 M112 14 L122 36 M118 26 L108 36"/>
</g>
<g transform="translate(2,3) scale(0.98,0.8)" stroke="#fff" stroke-width="2.4" fill="none" stroke-linecap="round">
<path d="M8 12 L8 34 M8 24 L26 10 M12 22 L28 36"/>
<path d="M36 12 L36 34 M36 24 L54 10 M40 22 L56 36"/>
<path d="M62 12 H86 M73 12 V38 M76 22 L84 28"/>
<path d="M94 10 H120 M100 18 H116 M96 26 H118 M104 8 V38 M112 14 L122 36 M118 26 L108 36"/>
</g>
<text x="6" y="57" font-family="Liberation Sans" font-size="11" fill="#c8c8c8" letter-spacing="0.5">www.kkx.net</text>
</svg>
<div class="abs" style="left:340.5px;top:107px;width:812.5px;height:643px;overflow:hidden">
<div class="code" style="top:2.4px"><span class="tx">          </span><span class="tg">&lt;p</span><span class="tg">&gt;</span><span class="tg">&lt;/p</span><span class="tg">&gt;</span></div>
<div class="code" style="top:22.0px"><span class="tx">        </span><span class="tg">&lt;/div</span><span class="tg">&gt;</span></div>
<div class="code" style="top:41.6px"></div>
<div class="code" style="top:61.2px"><span class="tx">        </span><span class="tg">&lt;div</span><span class="tx"> </span><span class="at">class=</span><span class="vl">&quot;article&quot;</span><span class="tg">&gt;</span></div>
<div class="code" style="top:80.8px"><span class="tx">          </span><span class="tg">&lt;h3</span><span class="tg">&gt;</span><span class="tx">Main window</span><span class="tg">&lt;/h3</span><span class="tg">&gt;</span></div>
<div class="code" style="top:100.4px"><span class="tx">          </span><span class="tg">&lt;p</span><span class="tx"> </span><span class="at">class=</span><span class="vl">&quot;top&quot;</span><span class="tg">&gt;</span><span class="tx">The main window with some different settings.</span><span class="tg">&lt;/p</span><span class="tg">&gt;</span></div>
<div class="code" style="top:120.0px"></div>
<div class="code" style="top:139.6px"><span class="tx">          </span><span class="tg">&lt;div</span><span class="tx"> </span><span class="at">class=</span><span class="vl">&quot;center&quot;</span><span class="tg">&gt;</span></div>
<div class="code" style="top:159.2px"><span class="tx">          </span><span class="tg">&lt;p</span><span class="tg">&gt;</span><span class="tx">No theme, document map visible and some documents and panels open.</span><span class="tg">&lt;/p</span><span class="tg">&gt;</span></div>
<div class="code" style="top:178.8px"><span class="tx">          </span><span class="tg">&lt;a</span><span class="tx"> </span><span class="at">href=</span><span class="vl">&quot;./screenshots/main01-100.png&quot;</span><span class="tx"> </span><span class="at">target=</span><span class="vl">&quot;_blank&quot;</span><span class="tg">&gt;</span><span class="tg">&lt;img</span><span class="tx"> </span><span class="at">src=</span><span class="vl">&quot;./screenshots/main01-100.png&quot;</span></div>
<div class="code" style="top:198.4px"><span class="tx">          </span><span class="tg">&lt;/div</span><span class="tg">&gt;</span></div>
<div class="code" style="top:218.0px"></div>
<div class="code" style="top:237.6px"><span class="tx">          </span><span class="tg">&lt;p</span><span class="tg">&gt;</span></div>
<div class="code" style="top:257.2px"><span class="tx">            </span><span class="tg">&lt;div</span><span class="tx"> </span><span class="at">class=</span><span class="vl">&quot;center&quot;</span><span class="tg">&gt;</span></div>
<div class="code" style="top:276.8px"><span class="tx">            </span><span class="tg">&lt;p</span><span class="tx"> </span><span class="at">class=</span><span class="vl">&quot;top&quot;</span><span class="tg">&gt;</span><span class="tx">Glossy theme with code explorer panel and color</span></div>
<div class="code" style="top:296.4px"><span class="tx">            highlighting in CSS source code.</span><span class="tg">&lt;/p</span><span class="tg">&gt;</span></div>
<div class="code" style="top:316.0px"><span class="tx">            </span><span class="tg">&lt;a</span><span class="tx"> </span><span class="at">href=</span><span class="vl">&quot;./screenshots/main02-100.png&quot;</span><span class="tx"> </span><span class="at">target=</span><span class="vl">&quot;_blank&quot;</span><span class="tg">&gt;</span><span class="tg">&lt;img</span><span class="tx"> </span><span class="at">src=</span><span class="vl">&quot;./screenshots/main02</span></div>
<div class="code" style="top:335.6px"><span class="tx">            </span><span class="tg">&lt;/div</span><span class="tg">&gt;</span></div>
<div class="code" style="top:355.2px"><span class="tx">          </span><span class="tg">&lt;/p</span><span class="tg">&gt;</span></div>
<div class="code" style="top:374.8px"></div>
<div class="code" style="top:394.4px"><span class="tx">          </span><span class="tg">&lt;p</span><span class="tg">&gt;</span></div>
<div class="code" style="top:414.0px"><span class="tx">            </span><span class="tg">&lt;div</span><span class="tx"> </span><span class="at">class=</span><span class="vl">&quot;center&quot;</span><span class="tg">&gt;</span></div>
<div class="code" style="top:433.6px"><span class="tx">            </span><span class="tg">&lt;p</span><span class="tx"> </span><span class="at">class=</span><span class="vl">&quot;top&quot;</span><span class="tg">&gt;</span><span class="tx">HTML preview.</span><span class="tg">&lt;/p</span><span class="tg">&gt;</span></div>
<div class="code" style="top:453.2px"><span class="tx">            </span><span class="tg">&lt;a</span><span class="tx"> </span><span class="at">href=</span><span class="vl">&quot;./screenshots/main03-100.png&quot;</span><span class="tx"> </span><span class="at">target=</span><span class="vl">&quot;_blank&quot;</span><span class="tg">&gt;</span><span class="tg">&lt;img</span><span class="tx"> </span><span class="at">src=</span><span class="vl">&quot;./screenshots/main03</span></div>
<div class="code" style="top:472.8px"><span class="tx">            </span><span class="tg">&lt;/div</span><span class="tg">&gt;</span></div>
<div class="code" style="top:492.4px"><span class="tx">          </span><span class="tg">&lt;/p</span><span class="tg">&gt;</span></div>
<div class="code" style="top:512.0px"></div>
<div class="code" style="top:531.6px"><span class="tx">          </span><span class="tg">&lt;p</span><span class="tg">&gt;</span></div>
<div class="code" style="top:551.2px"><span class="tx">            </span><span class="tg">&lt;div</span><span class="tx"> </span><span class="at">class=</span><span class="vl">&quot;center&quot;</span><span class="tg">&gt;</span></div>
<div class="code" style="top:570.8px"><span class="tx">            </span><span class="tg">&lt;p</span><span class="tx"> </span><span class="at">class=</span><span class="vl">&quot;top&quot;</span><span class="tg">&gt;</span><span class="tx">File manager and (S)FTP client.</span><span class="tg">&lt;/p</span><span class="tg">&gt;</span></div>
<div class="code" style="top:590.4px"><span class="tx">            </span><span class="tg">&lt;a</span><span class="tx"> </span><span class="at">href=</span><span class="vl">&quot;./screenshots/main04-100.png&quot;</span><span class="tx"> </span><span class="at">target=</span><span class="vl">&quot;_blank&quot;</span><span class="tg">&gt;</span><span class="tg">&lt;img</span><span class="tx"> </span><span class="at">src=</span><span class="vl">&quot;./screenshots/main04</span></div>
<div class="code" style="top:610.0px"><span class="tx">            </span><span class="tg">&lt;/div</span><span class="tg">&gt;</span></div>
<div class="code" style="top:629.6px"><span class="tx">          </span><span class="tg">&lt;/p</span><span class="tg">&gt;</span></div>
</div>
<div class="abs" style="left:315px;top:116px;width:3px;height:3px;background:#111;border-radius:50%"></div>
<div class="abs" style="left:315px;top:136px;width:3px;height:3px;background:#111;border-radius:50%"></div>
<div class="abs" style="left:315px;top:156px;width:3px;height:3px;background:#111;border-radius:50%"></div>
<div class="code" style="left:303px;top:167.2px;color:#111;font-size:17px">40</div>
<div class="abs" style="left:315px;top:195px;width:3px;height:3px;background:#111;border-radius:50%"></div>
<div class="abs" style="left:315px;top:214px;width:3px;height:3px;background:#111;border-radius:50%"></div>
<div class="abs" style="left:315px;top:234px;width:3px;height:3px;background:#111;border-radius:50%"></div>
<div class="abs" style="left:315px;top:254px;width:3px;height:3px;background:#111;border-radius:50%"></div>
<div class="code" style="left:303px;top:265.2px;color:#111;font-size:17px">45</div>
<div class="abs" style="left:315px;top:293px;width:3px;height:3px;background:#111;border-radius:50%"></div>
<div class="abs" style="left:315px;top:312px;width:3px;height:3px;background:#111;border-radius:50%"></div>
<div class="abs" style="left:315px;top:332px;width:3px;height:3px;background:#111;border-radius:50%"></div>
<div class="abs" style="left:315px;top:352px;width:3px;height:3px;background:#111;border-radius:50%"></div>
<div class="code" style="left:303px;top:363.2px;color:#111;font-size:17px">50</div>
<div class="abs" style="left:315px;top:391px;width:3px;height:3px;background:#111;border-radius:50%"></div>
<div class="abs" style="left:315px;top:410px;width:3px;height:3px;background:#111;border-radius:50%"></div>
<div class="abs" style="left:315px;top:430px;width:3px;height:3px;background:#111;border-radius:50%"></div>
<div class="abs" style="left:315px;top:450px;width:3px;height:3px;background:#111;border-radius:50%"></div>
<div class="abs" style="left:314px;top:470.2px;width:5px;height:1px;background:#222"></div>
<div class="abs" style="left:315px;top:489px;width:3px;height:3px;background:#111;border-radius:50%"></div>
<div class="abs" style="left:315px;top:508px;width:3px;height:3px;background:#111;border-radius:50%"></div>
<div class="abs" style="left:315px;top:528px;width:3px;height:3px;background:#111;border-radius:50%"></div>
<div class="abs" style="left:315px;top:548px;width:3px;height:3px;background:#111;border-radius:50%"></div>
<div class="code" style="left:303px;top:559.2px;color:#111;font-size:17px">60</div>
<div class="abs" style="left:315px;top:587px;width:3px;height:3px;background:#111;border-radius:50%"></div>
<div class="abs" style="left:315px;top:606px;width:3px;height:3px;background:#111;border-radius:50%"></div>
<div class="abs" style="left:315px;top:626px;width:3px;height:3px;background:#111;border-radius:50%"></div>
<div class="abs" style="left:315px;top:646px;width:3px;height:3px;background:#111;border-radius:50%"></div>
<div class="abs" style="left:314px;top:666.2px;width:5px;height:1px;background:#222"></div>
<div class="abs" style="left:315px;top:685px;width:3px;height:3px;background:#111;border-radius:50%"></div>
<div class="abs" style="left:315px;top:704px;width:3px;height:3px;background:#111;border-radius:50%"></div>
<div class="abs" style="left:315px;top:724px;width:3px;height:3px;background:#111;border-radius:50%"></div>
<div class="abs" style="left:315px;top:744px;width:3px;height:3px;background:#111;border-radius:50%"></div>
<div class="abs" style="left:329px;top:170.2px;width:10px;height:10px;border:1px solid #999;background:#fff"><div class="abs" style="left:2px;top:3.5px;width:4px;height:1px;background:#777"></div></div>
<div class="abs" style="left:329px;top:248.6px;width:10px;height:10px;border:1px solid #999;background:#fff"><div class="abs" style="left:2px;top:3.5px;width:4px;height:1px;background:#777"></div></div>
<div class="abs" style="left:329px;top:346.6px;width:10px;height:10px;border:1px solid #999;background:#fff"><div class="abs" style="left:2px;top:3.5px;width:4px;height:1px;background:#777"></div></div>
<div class="abs" style="left:329px;top:366.2px;width:10px;height:10px;border:1px solid #999;background:#fff"><div class="abs" style="left:2px;top:3.5px;width:4px;height:1px;background:#777"></div></div>
<div class="abs" style="left:329px;top:385.8px;width:10px;height:10px;border:1px solid #999;background:#fff"><div class="abs" style="left:2px;top:3.5px;width:4px;height:1px;background:#777"></div></div>
<div class="abs" style="left:329px;top:503.4px;width:10px;height:10px;border:1px solid #999;background:#fff"><div class="abs" style="left:2px;top:3.5px;width:4px;height:1px;background:#777"></div></div>
<div class="abs" style="left:329px;top:523.0px;width:10px;height:10px;border:1px solid #999;background:#fff"><div class="abs" style="left:2px;top:3.5px;width:4px;height:1px;background:#777"></div></div>
<div class="abs" style="left:329px;top:640.6px;width:10px;height:10px;border:1px solid #999;background:#fff"><div class="abs" style="left:2px;top:3.5px;width:4px;height:1px;background:#777"></div></div>
<div class="abs" style="left:329px;top:660.2px;width:10px;height:10px;border:1px solid #999;background:#fff"><div class="abs" style="left:2px;top:3.5px;width:4px;height:1px;background:#777"></div></div>
<div class="abs" style="left:335px;top:142px;width:4px;height:1px;background:#b8b8b8"></div>
<div class="abs" style="left:335px;top:318px;width:4px;height:1px;background:#b8b8b8"></div>
<div class="abs" style="left:335px;top:416px;width:4px;height:1px;background:#b8b8b8"></div>
<div class="abs" style="left:335px;top:456px;width:4px;height:1px;background:#b8b8b8"></div>
<div class="abs" style="left:335px;top:475px;width:4px;height:1px;background:#b8b8b8"></div>
<div class="abs" style="left:335px;top:593px;width:4px;height:1px;background:#b8b8b8"></div>
<div class="abs" style="left:335px;top:612px;width:4px;height:1px;background:#b8b8b8"></div>
<div class="abs" style="left:335px;top:730px;width:4px;height:1px;background:#b8b8b8"></div>
<div class="abs" style="left:335px;top:750px;width:4px;height:1px;background:#b8b8b8"></div>
<div class="abs" style="left:324px;top:206.4px;width:4px;height:135.2px;background:#00e000"></div>
<div class="abs" style="left:324px;top:382.8px;width:4px;height:37.2px;background:#00e000"></div>
<div class="abs" style="left:1153px;top:107px;width:14px;height:643px;background:#f0f0f0"></div>
<div class="abs" style="left:1153px;top:253px;width:14px;height:116px;background:#cdcdcd"></div>
<svg class="abs" style="left:1155px;top:110px" width="10" height="8" viewBox="0 0 10 8"><path d="M1.5 6 L5 2.5 L8.5 6" stroke="#555" stroke-width="1.6" fill="none"/></svg>
<svg class="abs" style="left:1155px;top:737px" width="10" height="8" viewBox="0 0 10 8"><path d="M1.5 2 L5 5.5 L8.5 2" stroke="#555" stroke-width="1.6" fill="none"/></svg>
<div class="abs" style="left:292px;top:750px;width:875px;height:14px;background:#f0f0f0"></div>
<div class="abs" style="left:307px;top:751px;width:205px;height:13px;background:#cdcdcd"></div>
<svg class="abs" style="left:295px;top:752px" width="8" height="10" viewBox="0 0 8 10"><path d="M6 1.5 L2.5 5 L6 8.5" stroke="#555" stroke-width="1.6" fill="none"/></svg>
<svg class="abs" style="left:1155px;top:752px" width="8" height="10" viewBox="0 0 8 10"><path d="M2 1.5 L5.5 5 L2 8.5" stroke="#555" stroke-width="1.6" fill="none"/></svg>
<div class="t" style="left:1188px;top:82px;font-size:13.5px;color:#6a6a6a;transform-origin:0 0;transform:rotate(90deg)">Document list</div>
<div class="t" style="left:1188px;top:182px;font-size:13.1px;color:#6a6a6a;transform-origin:0 0;transform:rotate(90deg)">Code Explorer</div>
<div class="t" style="left:1188px;top:282px;font-size:13.4px;color:#6a6a6a;transform-origin:0 0;transform:rotate(90deg)">Project Class View</div>
<div class="t" style="left:1188px;top:409px;font-size:13.4px;color:#6a6a6a;transform-origin:0 0;transform:rotate(90deg)">Project TODO List</div>
<div class="abs" style="left:1194px;top:81px;width:5px;height:89px;background:#777"></div>
<div class="abs" style="left:1194px;top:180px;width:5px;height:90px;background:#777"></div>
<div class="abs" style="left:1194px;top:280px;width:5px;height:116px;background:#777"></div>
<div class="abs" style="left:1194px;top:408px;width:5px;height:113px;background:#777"></div>
<div class="abs" style="left:175px;top:769px;width:84px;height:27px;background:#fafafa"></div>
<div class="t" style="left:30px;top:774px;font-size:13.6px;color:#8a8a8a">File Exp...</div>
<div class="t" style="left:114px;top:774px;font-size:13.6px;color:#8a8a8a">Clipboa...</div>
<div class="t" style="left:199px;top:774px;font-size:13.6px;color:#333">Text Cli...</div>
<div class="abs" style="left:90px;top:769px;width:1px;height:22px;background:#c8c8c8"></div>
<div class="abs" style="left:174px;top:769px;width:1px;height:22px;background:#c8c8c8"></div>
<div class="abs" style="left:331px;top:766px;width:70px;height:25px;background:#f7f7f7;border:1px solid #bcbcbc;border-top:none"></div>
<div class="t" style="left:287px;top:772px;font-size:13.6px;color:#222">Home</div>
<div class="t" style="left:356px;top:772px;font-size:13.6px;color:#222;letter-spacing:0.45px">Editor</div>
<div class="t" style="left:424px;top:772px;font-size:13.6px;color:#222;letter-spacing:0.25px">Preview</div>
<div class="t" style="left:505px;top:772px;font-size:13.6px;color:#222;letter-spacing:0.25px">Preview</div>
<div class="t" style="left:587px;top:772px;font-size:13.6px;color:#222;letter-spacing:0.2px">File Commander</div>
<div class="abs" style="left:482px;top:768px;width:1px;height:22px;background:#c8c8c8"></div>
<div class="abs" style="left:563px;top:768px;width:1px;height:22px;background:#c8c8c8"></div>
<div class="abs" style="left:695px;top:768px;width:1px;height:22px;background:#c8c8c8"></div>
<svg class="abs" style="left:11px;top:772px" width="16" height="16" viewBox="0 0 16 16"><path d="M1 1 H5 L6 2 H10 V6 H1 Z" fill="url(#gFolder)" stroke="#d8a020" stroke-width="0.5"/><path d="M3 6 V13 H8 M3 9 H8" stroke="#777" stroke-width="1" fill="none"/><path d="M8 7 H14 V11 H8 Z M8 11 H14 V15 H8 Z" fill="url(#gFolder)" stroke="#d8a020" stroke-width="0.5"/></svg>
<svg class="abs" style="left:95px;top:772px" width="16" height="16" viewBox="0 0 16 16"><rect x="2" y="1.5" width="10" height="13" fill="#f8f8f8" stroke="#999"/><rect x="2" y="1.5" width="3" height="13" fill="#e8c050"/><rect x="5" y="0.5" width="5" height="3" fill="#bbb"/><path d="M12 4 L14 6 V15 H6" fill="none" stroke="#aaa"/></svg>
<svg class="abs" style="left:180px;top:772px" width="16" height="16" viewBox="0 0 16 16"><rect x="2.5" y="2" width="11" height="13" rx="1" fill="#f6e8d8" stroke="#a87040"/><rect x="5.5" y="0.5" width="5" height="3" fill="#a87040"/><path d="M4.5 6 L5.5 7 L7 5 M8 6 H12 M4.5 9 L5.5 10 L7 8 M8 9 H12 M4.5 12 L5.5 13 L7 11 M8 12 H12" stroke="#c03030" stroke-width="0.9" fill="none"/></svg>
<svg class="abs" style="left:268px;top:771px" width="16" height="16" viewBox="0 0 16 16"><path d="M1 8 L7.5 1.5 L14 8 H12.5 V14.5 H2.5 V8 Z" fill="#f0d8c0" stroke="#8a6040" stroke-width="0.8"/><rect x="6" y="9" width="3" height="5.5" fill="#c07030"/><rect x="11" y="2" width="2" height="4" fill="#8a6040"/></svg>
<svg class="abs" style="left:337px;top:771px" width="16" height="16" viewBox="0 0 16 16"><path d="M14 1.5 L15 3 L4 14 L1.5 14.5 L2 12 L13 1 Z" fill="#f5c84a" stroke="#c89020" stroke-width="0.6"/><path d="M13 1 L15 3 L14 4 L12 2 Z" fill="#e05030"/></svg>
<svg class="abs" style="left:405px;top:771px" width="16" height="16" viewBox="0 0 16 16"><circle cx="8" cy="8.5" r="6" fill="#3aa0e8"/><path d="M4.5 8 H11.5 Q11 5.5 8 5.5 Q5 5.5 4.5 8 Z M4.5 10 Q5 12.5 8.5 12.5 Q10.5 12.5 11.5 11" fill="#e8f6ff"/><path d="M1.5 13 Q0 10 6 5 Q12 0 15 2 Q16 5 11 9" stroke="#e0a020" stroke-width="1.2" fill="none"/></svg>
<svg class="abs" style="left:487px;top:771px" width="16" height="16" viewBox="0 0 16 16"><circle cx="8" cy="8" r="7" fill="#db4437"/><path d="M8 8 L14.1 4.5 A7 7 0 0 1 8 15 Z" fill="#f4c20d"/><path d="M8 8 L8 15 A7 7 0 0 1 1.9 4.5 Z" fill="#0f9d58"/><circle cx="8" cy="8" r="3.3" fill="#fff"/><circle cx="8" cy="8" r="2.5" fill="#4285f4"/></svg>
<svg class="abs" style="left:568px;top:771px" width="16" height="16" viewBox="0 0 16 16"><path d="M1 1 H5 L6 2 H9 V6 H1 Z" fill="url(#gFolder)" stroke="#d8a020" stroke-width="0.5"/><path d="M3 6 V12 H7 M3 9 H7" stroke="#777" stroke-width="1" fill="none"/><path d="M7 7 H10 L11 8 H14 V11 H7 Z" fill="url(#gFolder)" stroke="#d8a020" stroke-width="0.5"/><path d="M7 11 H10 L11 12 H14 V15 H7 Z" fill="url(#gFolder)" stroke="#d8a020" stroke-width="0.5"/></svg>
<div class="abs" style="left:1px;top:796px;width:1198px;height:1px;background:#dadada"></div>
<div class="t" style="left:8px;top:800px;font-size:13.6px;color:#111;letter-spacing:0.4px">Html (Windows)</div>
<div class="t" style="left:499px;top:800px;font-size:13.6px;color:#111;letter-spacing:0.15px">Insert</div>
<div class="t" style="left:570px;top:800px;font-size:13.6px;color:#111">Row</div>
<div class="t" style="left:641px;top:800px;font-size:13.6px;color:#111;letter-spacing:0.15px">Ln 45, Col 44 (0)</div>
<div class="t" style="left:753px;top:800px;font-size:13.6px;color:#111;letter-spacing:0.75px">($20=32)</div>
<div class="t" style="left:863px;top:800px;font-size:13.6px;color:#111;letter-spacing:0.12px">Unicode (UTF-8)</div>
<div class="abs" style="left:297px;top:798px;width:1px;height:16px;background:#d0d0d0"></div>
<div class="abs" style="left:387px;top:798px;width:1px;height:16px;background:#d0d0d0"></div>
<div class="abs" style="left:491px;top:798px;width:1px;height:16px;background:#d0d0d0"></div>
<div class="abs" style="left:564px;top:798px;width:1px;height:16px;background:#d0d0d0"></div>
<div class="abs" style="left:636px;top:798px;width:1px;height:16px;background:#d0d0d0"></div>
<div class="abs" style="left:858px;top:798px;width:1px;height:16px;background:#d0d0d0"></div>
<div class="abs" style="left:1196px;top:803px;width:2px;height:2px;background:#b0b0b0"></div>
<div class="abs" style="left:1192px;top:807px;width:2px;height:2px;background:#b0b0b0"></div>
<div class="abs" style="left:1196px;top:807px;width:2px;height:2px;background:#b0b0b0"></div>
<div class="abs" style="left:1188px;top:811px;width:2px;height:2px;background:#b0b0b0"></div>
<div class="abs" style="left:1192px;top:811px;width:2px;height:2px;background:#b0b0b0"></div>
<div class="abs" style="left:1196px;top:811px;width:2px;height:2px;background:#b0b0b0"></div>
</body></html>
